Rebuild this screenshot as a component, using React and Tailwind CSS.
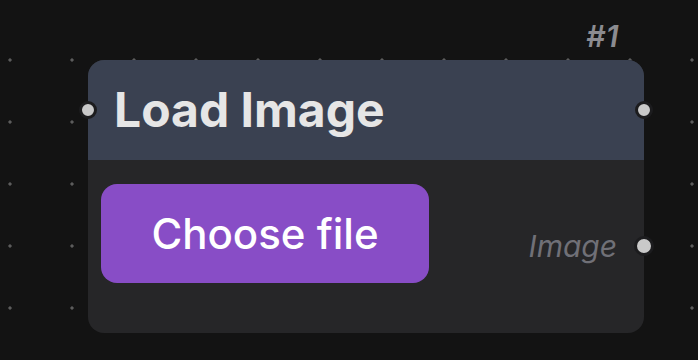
function Port({ size = "w-[18px] h-[18px]", extra = "" }) {
  return (
    <div
      className={`${size} ${extra} shrink-0 rounded-full bg-[#c9c9c9] border-[3px] border-[#1c1c1e] z-10`}
    />
  );
}

export default function App() {
  return (
    <div
      className="w-[698px] h-[360px] overflow-hidden bg-[#131313] bg-[radial-gradient(circle,#5c5c5c_1.4px,transparent_1.8px)] bg-[length:62px_62px] bg-[position:41px_29px] pl-[88px] pt-[20px]"
      style={{ fontFamily: "Inter, 'Noto Sans', sans-serif" }}
    >
      <div className="w-[556px] h-[40px] flex justify-end pr-[25px] pt-[1px]">
        <span className="text-[30px] leading-none font-semibold italic text-[#8b8b90] tracking-[0.5px]">#1</span>
      </div>
      <div className="w-[556px] h-[273px] rounded-[16px] bg-[#262628] flex flex-col">
        <div className="h-[100px] shrink-0 rounded-t-[16px] bg-[#3a4151] flex items-center">
          <Port extra="-ml-[9px]" />
          <span className="ml-[17px] text-[48px] leading-none font-bold text-[#e6e6e6]">
            Load Image
          </span>
          <Port extra="ml-auto -mr-[9px]" />
        </div>
        <div className="flex-1 flex items-start pt-[24px] pl-[13px]">
          <button className="w-[328px] h-[99px] rounded-[16px] bg-[#884dc6] text-white text-[42px] leading-none font-medium flex items-center justify-center">
            Choose file
          </button>
          <div className="ml-auto mt-[47px] -mr-[10px] flex items-center gap-[17px]">
            <span className="text-[30px] leading-none italic text-[#707077]">Image</span>
            <Port size="w-[20px] h-[20px]" />
          </div>
        </div>
      </div>
    </div>
  );
}
